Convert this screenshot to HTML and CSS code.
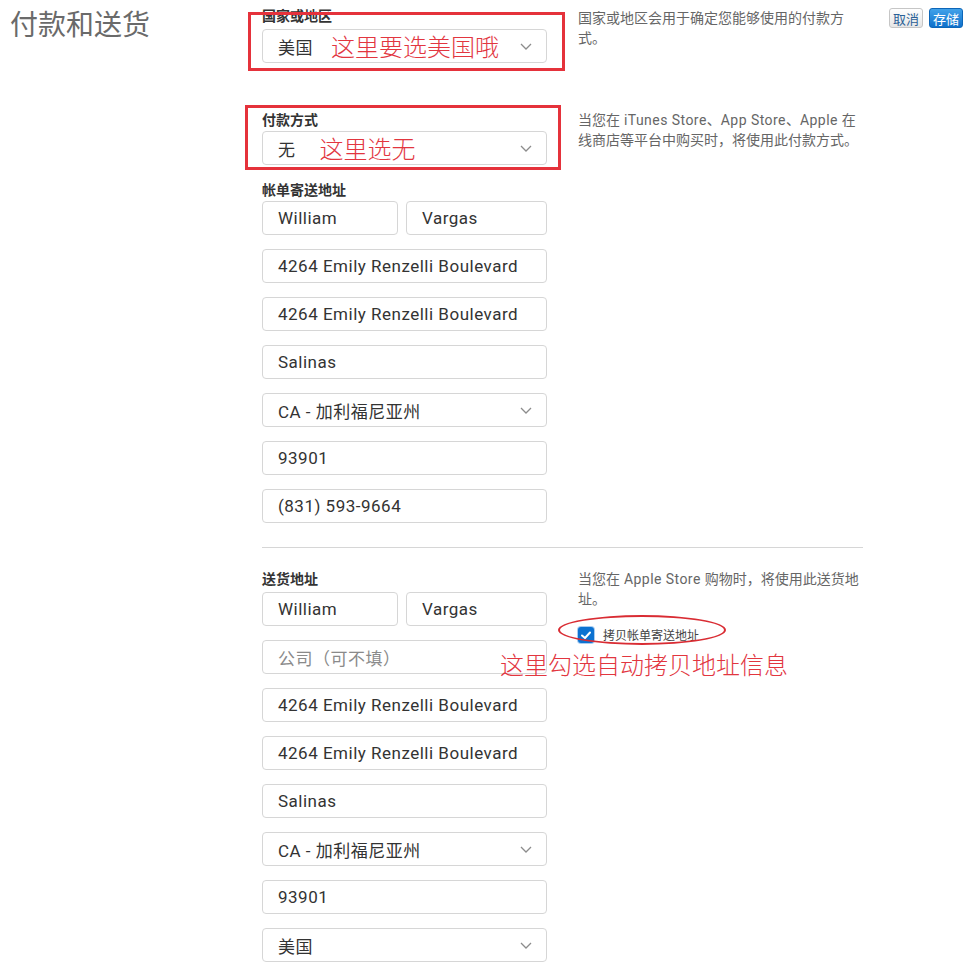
FILE: index.html
```html
<!DOCTYPE html>
<html lang="zh-CN">
<head>
<meta charset="utf-8">
<title>付款和送货</title>
<link rel="stylesheet" href="styles.css">
</head>
<body>
<div class="page">
  <h1 class="title">付款和送货</h1>
  <main class="content">
    <section class="row row-country">
      <div class="col-form">
        <div class="label label-country">国家或地区</div>
        <div class="field select"><span>美国</span><span class="note note-inline note-country">这里要选美国哦</span><svg class="chev" viewBox="0 0 12 7" width="12" height="7"><polyline points="1,1 6,6 11,1"/></svg></div>
      </div>
      <p class="help">国家或地区会用于确定您能够使用的付款方式。</p>
      <div class="redbox redbox-country"></div>
    </section>

    <section class="row row-payment">
      <div class="col-form">
        <div class="label">付款方式</div>
        <div class="field select"><span>无</span><span class="note note-inline note-pay">这里选无</span><svg class="chev" viewBox="0 0 12 7" width="12" height="7"><polyline points="1,1 6,6 11,1"/></svg></div>
      </div>
      <p class="help">当您在<span class="lat"> iTunes Store</span>、<span class="lat">App Store</span>、<span class="lat">Apple </span>在线商店等平台中购买时，将使用此付款方式。</p>
      <div class="redbox redbox-pay"></div>
    </section>

    <section class="row row-billing">
      <div class="col-form">
        <div class="label">帐单寄送地址</div>
        <div class="fields">
          <div class="name-row">
            <div class="field">William</div>
            <div class="field">Vargas</div>
          </div>
          <div class="field">4264 Emily Renzelli Boulevard</div>
          <div class="field">4264 Emily Renzelli Boulevard</div>
          <div class="field">Salinas</div>
          <div class="field select"><span>CA - 加利福尼亚州</span><svg class="chev" viewBox="0 0 12 7" width="12" height="7"><polyline points="1,1 6,6 11,1"/></svg></div>
          <div class="field">93901</div>
          <div class="field">(831) 593-9664</div>
        </div>
      </div>
    </section>

    <hr class="divider">

    <section class="row row-shipping">
      <div class="col-form">
        <div class="label label-ship">送货地址</div>
        <div class="fields">
          <div class="name-row">
            <div class="field">William</div>
            <div class="field">Vargas</div>
          </div>
          <div class="field placeholder">公司（可不填）</div>
          <div class="field">4264 Emily Renzelli Boulevard</div>
          <div class="field">4264 Emily Renzelli Boulevard</div>
          <div class="field">Salinas</div>
          <div class="field select"><span>CA - 加利福尼亚州</span><svg class="chev" viewBox="0 0 12 7" width="12" height="7"><polyline points="1,1 6,6 11,1"/></svg></div>
          <div class="field">93901</div>
          <div class="field select"><span>美国</span><svg class="chev" viewBox="0 0 12 7" width="12" height="7"><polyline points="1,1 6,6 11,1"/></svg></div>
        </div>
      </div>
      <div class="col-help">
        <p class="help">当您在<span class="lat"> Apple Store </span>购物时，将使用此送货地址。</p>
        <label class="copy">
          <span class="checkbox"><svg viewBox="0 0 16 16" width="16" height="16"><polyline points="4,8.5 7,11 12,5.5"/></svg></span>
          <span>拷贝帐单寄送地址</span>
        </label>
      </div>
      <div class="ellipse"></div>
      <div class="note note-ship">这里勾选自动拷贝地址信息</div>
    </section>
  </main>
  <div class="actions">
    <button class="btn btn-cancel">取消</button>
    <button class="btn btn-save">存储</button>
  </div>
</div>
</body>
</html>
```

FILE: styles.css
```css
* { box-sizing: border-box; }
html, body { margin: 0; padding: 0; background: #fff; }
body {
  font-family: Roboto, "Noto Sans CJK SC", sans-serif;
  color: #333;
  width: 967px;
  overflow: hidden;
}
.page {
  display: grid;
  grid-template-columns: 262px 601px 1fr;
  align-items: start;
}
.title {
  margin: 0;
  padding: 4px 0 0 10px;
  font-family: "Noto Sans CJK SC", sans-serif;
  font-size: 28px;
  font-weight: 400;
  line-height: 38px;
  color: #6a6a6a;
}
.content { padding-top: 6px; }
.row {
  position: relative;
  display: grid;
  grid-template-columns: 285px 285px;
  column-gap: 31px;
  align-items: start;
}
.row-country .help { margin-top: 2px; }
.row-payment { margin-top: 47px; }
.row-billing { margin-top: 15px; }
.row-shipping { margin-top: 21px; }
.label {
  font-family: "Noto Sans CJK SC", sans-serif;
  font-size: 14px;
  font-weight: 700;
  line-height: 18px;
  margin-bottom: 3px;
  color: #333;
}
.label-country { margin-bottom: 5px; }
.label-ship { margin-bottom: 5px; }
.fields { display: flex; flex-direction: column; gap: 14px; }
.name-row { display: grid; grid-template-columns: 136px 141px; column-gap: 8px; }
.field {
  height: 34px;
  border: 1px solid #d6d6d6;
  border-radius: 4px;
  padding: 0 14px 0 15px;
  display: flex;
  align-items: center;
  font-size: 17px;
  letter-spacing: 0.5px;
  color: #333;
  white-space: nowrap;
}
.placeholder { color: #8a8a8a; }
.chev { margin-left: auto; flex: none; }
.chev polyline { fill: none; stroke: #8c8c8c; stroke-width: 1.3; }
.help {
  margin: 0;
  font-family: Roboto, "Noto Sans CJK SC", sans-serif;
  font-size: 14px;
  line-height: 20px;
  color: #666;
}
.lat { letter-spacing: 0.45px; }
.copy {
  display: flex;
  align-items: center;
  gap: 9px;
  margin-top: 17px;
  font-family: "Noto Sans CJK SC", sans-serif;
  font-size: 12px;
  line-height: 18px;
  color: #444;
}
.checkbox {
  width: 16px;
  height: 16px;
  border-radius: 3px;
  background: #0c72d1;
  box-shadow: 0 0 0 1px #a9cdf0;
  display: block;
  flex: none;
}
.checkbox svg { display: block; }
.checkbox polyline { fill: none; stroke: #fff; stroke-width: 2; stroke-linecap: round; stroke-linejoin: round; }
.divider {
  margin: 24px 0 0;
  border: 0;
  border-top: 1px solid #d6d6d6;
  height: 0;
}
.note {
  font-family: "Noto Sans CJK SC", sans-serif;
  font-weight: 300;
  font-size: 24px;
  line-height: 28px;
  letter-spacing: 0;
  color: #e2363f;
}
.note-country { margin-left: 18px; }
.note-pay { margin-left: 24px; }
.redbox {
  position: absolute;
  border: 3px solid #e5323b;
  pointer-events: none;
}
.redbox-country { left: -14px; top: 6px; width: 317px; height: 59px; }
.redbox-pay { left: -17px; top: -5px; width: 316px; height: 65px; }
.ellipse {
  position: absolute;
  left: 296px;
  top: 46px;
  width: 168px;
  height: 30px;
  border: 2.5px solid #d92c33;
  border-radius: 50%;
}
.note-ship { position: absolute; left: 238px; top: 81px; white-space: nowrap; }
.actions {
  justify-self: end;
  display: flex;
  gap: 6px;
  padding: 8px 4px 0 0;
}
.btn {
  font-family: "Noto Sans CJK SC", sans-serif;
  font-size: 13px;
  line-height: 17px;
  height: 20px;
  padding: 0 3px;
  border-radius: 3px;
  cursor: pointer;
}
.btn-cancel {
  background: linear-gradient(#fefefe, #e6e6e6);
  border: 1px solid #c6c6c6;
  color: #2a5f96;
}
.btn-save {
  background: linear-gradient(#41a2ea, #0f70cb);
  border: 1px solid #0d66b8;
  color: #fff;
}
```
